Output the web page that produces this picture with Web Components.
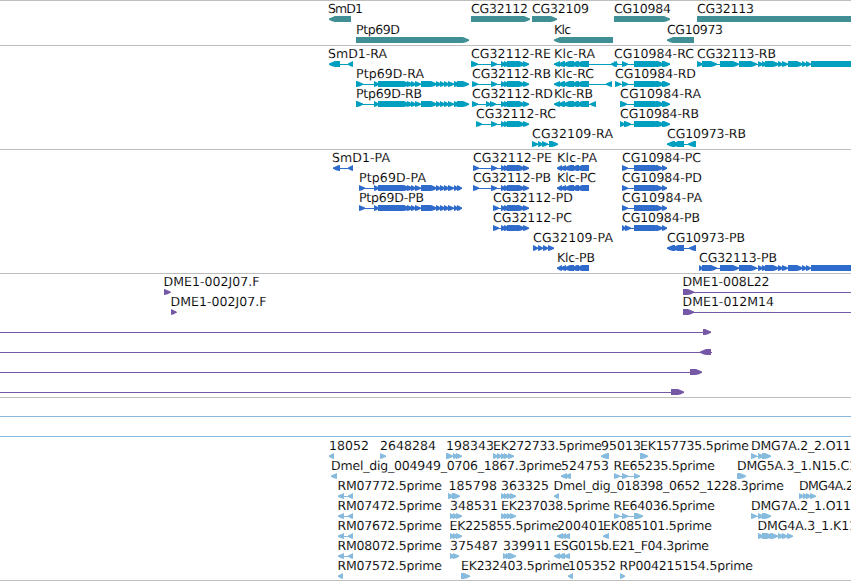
<!DOCTYPE html>
<html lang="en">
<head>
<meta charset="utf-8">
<title>Genome browser</title>
<style>
  body { margin: 0; background: #fff; overflow: hidden; }
</style>
</head>
<body>
<genome-view></genome-view>

<script>
// One labelled feature: thin intron line plus arrow shaped blocks
class GenomeFeature extends HTMLElement {
  constructor() {
    super();
    this.attachShadow({ mode: 'open' });
  }

  connectedCallback() {
    this.render();
  }

  block(a, b, left) {
    // short blocks are wedges, long ones keep a square tail
    const taper = Math.min(6, b - a);
    const tip = left ? a : b;
    const tail = left ? b : a;
    const dir = left ? 1 : -1;
    const neck = tip + dir * taper;
    const mid = tip + dir * taper * 0.5;
    const pts = [[tail, 15], [neck, 15], [mid, 16.2], [tip, 17.5], [tip, 18.8], [mid, 20.2], [neck, 21], [tail, 21]];
    return `<polygon points="${pts.map(p => p.join()).join(' ')}" />`;
  }

  render() {
    const label = this.getAttribute('label') || '';
    const x = Number(this.getAttribute('x'));
    const end = Number(this.getAttribute('end'));
    const left = this.getAttribute('strand') === '-';
    const blocks = (this.getAttribute('blocks') || '').split(' ').filter(Boolean).map(b => b.split('-').map(Number));
    const line = (this.getAttribute('line') || '').split('-').map(Number);
    const from = line.length === 2 ? line[0] : blocks[0][0];
    const to = line.length === 2 ? line[1] : blocks[blocks.length - 1][1];

    this.shadowRoot.innerHTML = `
      <style>
        :host { grid-area: 1 / 1; display: block; height: 20px; }
        svg { display: block; width: 100%; height: 21px; overflow: visible; }
        /* hairline white stroke keeps the labels light */
        text {
          font: 12.5px "DejaVu Sans", sans-serif;
          fill: #000;
          stroke: #fff;
          stroke-width: 0.1px;
          text-rendering: geometricPrecision;
        }
        .shape { fill: var(--track-color); }
      </style>
      <svg>
        <g class="shape">
          <rect x="${from}" y="18" width="${to - from}" height="1" />
          ${blocks.map(([a, b]) => this.block(a, b, left)).join('')}
        </g>
        ${label ? `<text x="${x}" y="12" textLength="${end - x}">${label}</text>` : ''}
      </svg>
    `;
  }
}

// A lane stacks its features in the same grid cell
class TrackLane extends HTMLElement {
  constructor() {
    super();
    this.attachShadow({ mode: 'open' });
    this.shadowRoot.innerHTML = `
      <style>
        :host { display: grid; grid-template-columns: 100%; height: 20px; }
        :host([ruled]) {
          background: linear-gradient(var(--track-color), var(--track-color)) 0 18px / 100% 1px no-repeat;
        }
      </style>
      <slot></slot>
    `;
  }
}

class BrowserTrack extends HTMLElement {
  constructor() {
    super();
    this.attachShadow({ mode: 'open' });
    this.shadowRoot.innerHTML = `
      <style>
        :host {
          display: flex;
          flex-direction: column;
          gap: var(--lane-gap, 0);
          padding-bottom: var(--track-pad, 3px);
          border-top: 1px solid #bebebe;
        }
      </style>
      <slot></slot>
    `;
  }
}

// Lanes: [label, label start, label end, blocks, strand, line]
const exonsPtp = '374-379 378-410 407-413 411-416 415-421 421-437 436-441 440-445 444-449 448-454';
const exons32112 = '501-506 504-510 507-521 516-525 523-529';
const exonsKlc = '554-560 558-565 563-574 571-579 576-589';
const exonsKlcP = '557-562 560-566 564-574 571-579 576-589';
const exons10984 = '634-661 656-664 662-670';
const exons32113 = '702-717 720-739 739-757 758-763 762-767 765-779 778-783 782-788 788-803 802-807 806-811 811-870';

const tracks = [
  { color: '#3f8f94', gap: '1px', pad: '3px', lanes: [
    [
      ['SmD1', 328, 363, '329-351', '-'],
      ['CG32112', 471, 528, '471-530'],
      ['CG32109', 532, 589, '532-557'],
      ['CG10984', 614, 671, '614-670'],
      ['CG32113', 697, 754, '697-870']
    ],
    [
      ['Ptp69D', 356, 400, '356-469'],
      ['Klc', 554, 571, '554-613', '-'],
      ['CG10973', 667, 723, '667-694', '-']
    ]
  ] },
  { color: '#009ebf', lanes: [
    [
      ['SmD1-RA', 328, 387, '329-340 348-353', '-'],
      ['CG32112-RE', 471, 551, '471-478 491-497 ' + exons32112],
      ['Klc-RA', 554, 595, exonsKlc + ' 611-617', '-'],
      ['CG10984-RC', 614, 694, '614-618 622-628 ' + exons10984],
      ['CG32113-RB', 697, 776, '697-703 ' + exons32113]
    ],
    [
      ['Ptp69D-RA', 356, 424, '356-363 ' + exonsPtp + ' 454-460 457-469'],
      ['CG32112-RB', 472, 551, '472-478 491-497 ' + exons32112],
      ['Klc-RC', 554, 594, exonsKlc + ' 606-612', '-'],
      ['CG10984-RD', 615, 696, '615-621 622-628 ' + exons10984]
    ],
    [
      ['Ptp69D-RB', 356, 422, '356-363 ' + exonsPtp + ' 454-460 457-469'],
      ['CG32112-RD', 472, 553, '472-478 486-491 490-496 ' + exons32112],
      ['Klc-RB', 554, 593, exonsKlc + ' 590-596', '-'],
      ['CG10984-RA', 620, 701, '620-627 ' + exons10984]
    ],
    [
      ['CG32112-RC', 476, 556, '476-482 491-497 ' + exons32112],
      ['CG10984-RB', 620, 699, '620-625 624-631 ' + exons10984]
    ],
    [
      ['CG32109-RA', 532, 613, '532-538 538-543 542-548 549-558'],
      ['CG10973-RB', 667, 746, '667-675 672-684 688-696', '-']
    ]
  ] },
  { color: '#2f6bcb', lanes: [
    [
      ['SmD1-PA', 332, 390, '333-340 348-353', '-'],
      ['CG32112-PE', 473, 552, '473-479 491-497 ' + exons32112],
      ['Klc-PA', 557, 597, exonsKlcP, '-'],
      ['CG10984-PC', 622, 701, '622-628 634-661 656-663 662-667']
    ],
    [
      ['Ptp69D-PA', 359, 426, '359-365 ' + exonsPtp + ' 454-458 457-462'],
      ['CG32112-PB', 473, 551, '473-479 491-497 ' + exons32112],
      ['Klc-PC', 557, 596, exonsKlcP, '-'],
      ['CG10984-PD', 622, 702, '622-628 634-661 656-663 662-667']
    ],
    [
      ['Ptp69D-PB', 359, 424, '359-365 ' + exonsPtp + ' 454-458 457-462'],
      ['CG32112-PD', 493, 573, '493-499 ' + exons32112],
      ['CG10984-PA', 622, 702, '622-628 634-661 656-663 662-667']
    ],
    [
      ['CG32112-PC', 493, 572, '493-499 ' + exons32112],
      ['CG10984-PB', 622, 700, '622-626 625-631 634-661 656-663 662-667']
    ],
    [
      ['CG32109-PA', 533, 613, '533-538 538-543 543-548 548-554'],
      ['CG10973-PB', 667, 745, '667-675 672-684 689-696', '-']
    ],
    [
      ['Klc-PB', 557, 595, exonsKlcP, '-'],
      ['CG32113-PB', 699, 777, '699-703 ' + exons32113]
    ]
  ] },
  { color: '#7559a7', lanes: [
    [
      ['DME1-002J07.F', 163.5, 259.5, '164-170.5'],
      ['DME1-008L22', 682.5, 769.5, '683-694', '+', '683-851']
    ],
    [
      ['DME1-002J07.F', 170.5, 266.5, '171-176.5'],
      ['DME1-012M14', 682.5, 774, '683-694', '+', '683-851']
    ],
    [['', 0, 0, '703-711', '+', '0-711']],
    [['', 0, 0, '700-711', '-', '0-712']],
    [['', 0, 0, '690-702', '+', '0-701']],
    [['', 0, 0, '671-684', '+', '0-683']]
  ] },
  { color: '#86bbdd', pad: '2px', lanes: [
    'ruled',
    'ruled',
    [
      ['18052', 329, 369, '329-334', '-'],
      ['2648284', 380, 436, '380-386'],
      ['198343', 446, 494, '446-453 453-458 456-462'],
      ['EK272733.5prime', 493, 602, '493-498 497-502 501-506 504-509 508-514'],
      ['95013', 601, 641, '601-609', '-'],
      ['EK157735.5prime', 640, 749, '640-648'],
      ['DMG7A.2_2.O11', 751, 851, '751-757 758-764 762-771']
    ],
    [
      ['Dmel_dig_004949_0706_1867.3prime', 331, 562, '331-337', '-'],
      ['524753', 561, 609, '561-567 565-571', '-'],
      ['RE65235.5prime', 613.5, 715, '614-620 622-628 634-640'],
      ['DMG5A.3_1.N15.C1', 737, 857, '737-741 738-746']
    ],
    [
      ['RM07772.5prime', 337.5, 442, '338-344 348-353', '-'],
      ['185798', 448.5, 497, '448-454 452-460'],
      ['363325', 501, 549, '501-506 504-509 507-512 510-516'],
      ['Dmel_dig_018398_0652_1228.3prime', 553.5, 784, '554-559', '-'],
      ['DMG4A.2', 799, 854, '799-804 803-808 806-811 810-816']
    ],
    [
      ['RM07472.5prime', 337.5, 442, '338-344 348-353', '-'],
      ['348531', 450, 498, '450-455 453-458 456-462'],
      ['EK237038.5prime', 501, 610, '501-506 504-509 507-512 510-516'],
      ['RE64036.5prime', 613.5, 715, '614-620 622-628 634-643'],
      ['DMG7A.2_1.O11', 751, 851, '751-757 758-764 762-771']
    ],
    [
      ['RM07672.5prime', 337.5, 442, '338-344 348-353', '-'],
      ['EK225855.5prime', 449.5, 559, '450-455 453-458 456-462'],
      ['200401', 557, 605, '557-563 561-566 564-570', '-'],
      ['EK085101.5prime', 603, 712, '603-609', '-'],
      ['DMG4A.3_1.K11', 757.5, 857, '758-764 762-773 770-778 778-784 782-788 787-793']
    ],
    [
      ['RM08072.5prime', 337.5, 442, '338-344 348-353', '-'],
      ['375487', 450, 498, '450-455 453-459'],
      ['339911', 503, 551, '503-508 506-511 508-516'],
      ['ESG015b.E21_F04.3prime', 553.5, 709, '554-560 558-565 564-570', '-']
    ],
    [
      ['RM07572.5prime', 337.5, 442, '338-343', '-'],
      ['EK232403.5prime', 461, 570, '461-470'],
      ['105352', 568, 616, '568-573', '-'],
      ['RP004215154.5prime', 619.5, 753, '620-625']
    ]
  ] }
];

class GenomeView extends HTMLElement {
  constructor() {
    super();
    this.attachShadow({ mode: 'open' });
  }

  connectedCallback() {
    this.render();
  }

  render() {
    const feature = ([label, x, end, blocks, strand = '+', line = '']) =>
      `<genome-feature label="${label}" x="${x}" end="${end}" blocks="${blocks}" strand="${strand}" line="${line}"></genome-feature>`;
    const lane = l => l === 'ruled'
      ? '<track-lane ruled></track-lane>'
      : `<track-lane>${l.map(feature).join('')}</track-lane>`;

    this.shadowRoot.innerHTML = `
      <style>
        :host {
          display: flex;
          flex-direction: column;
          box-sizing: border-box;
          width: 851px;
          height: 581px;
          overflow: hidden;
          background: #fff;
          border-bottom: 1px solid #bebebe;
        }
      </style>
      ${tracks.map(t => `
        <browser-track style="--track-color: ${t.color}; --lane-gap: ${t.gap || 0}; --track-pad: ${t.pad || '3px'}">
          ${t.lanes.map(lane).join('')}
        </browser-track>`).join('')}
    `;
  }
}

customElements.define('genome-feature', GenomeFeature);
customElements.define('track-lane', TrackLane);
customElements.define('browser-track', BrowserTrack);
customElements.define('genome-view', GenomeView);
</script>
</body>
</html>
